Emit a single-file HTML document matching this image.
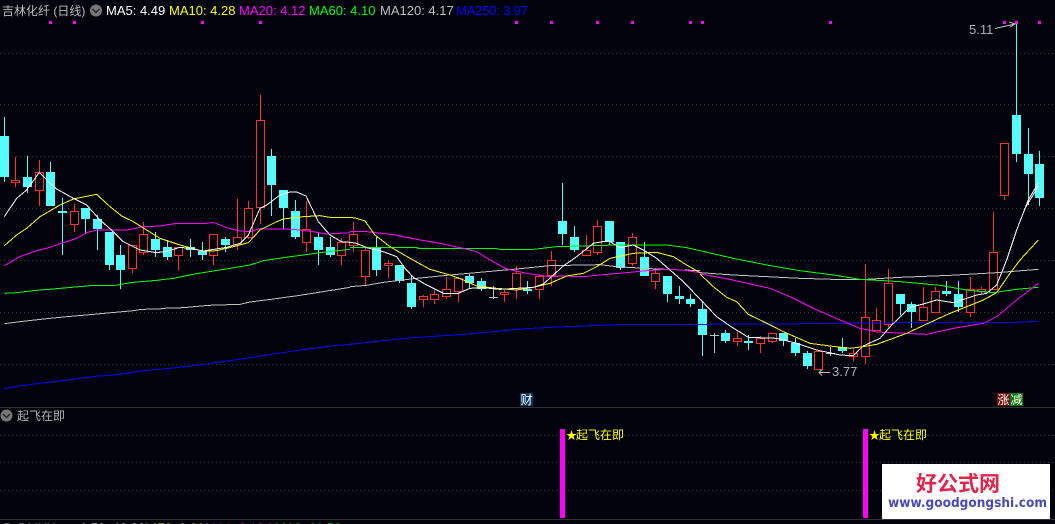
<!DOCTYPE html>
<html lang="zh">
<head>
<meta charset="utf-8">
<title>吉林化纤 (日线)</title>
<style>
html,body{margin:0;padding:0;width:1055px;height:524px;overflow:hidden;background:#02020c}
svg{display:block;position:absolute;left:0;top:0}
text{font-family:"Liberation Sans","Noto Sans CJK SC",sans-serif;font-size:13px}
.l polyline{fill:none;stroke-width:1;vector-effect:non-scaling-stroke}
.cn{font-size:12px}
</style>
</head>
<body>
<svg width="1055" height="524" viewBox="0 0 1055 524" xmlns="http://www.w3.org/2000/svg">
<rect width="1055" height="524" fill="#02020c"/>
<!-- grid -->
<path shape-rendering="crispEdges" d="M0 53.5H1055M0 104.5H1055M0 156.5H1055M0 208.5H1055M0 260.5H1055M0 312.5H1055M0 364.5H1055M0 435.5H1055M0 462.5H1055M0 490.5H1055" stroke="#3c3c3c" stroke-dasharray="1 3" fill="none"/>
<!-- separators -->
<path shape-rendering="crispEdges" d="M0 407.5H1055M0 519.5H1055" stroke="#333" fill="none"/>

<g shape-rendering="crispEdges">
<!-- red wicks -->
<path fill="none" stroke="#ff3232" d="M15.5 157V187M39.5 160V206M74.5 204V232M132.5 245V273M143.5 222V255M178.5 247V270M213.5 234V265M237.5 199V250M248.5 201V239M260.5 95V224M306.5 201V252M341.5 238V265M353.5 222V252M365.5 247V285M388.5 261V278M423.5 295V307M434.5 290V304M446.5 277V299M458.5 277V302M504.5 290V302M516.5 266V299M539.5 274V299M551.5 251V286M586.5 235V256M597.5 220V255M632.5 233V266M655.5 268V289M737.5 332V346M760.5 336V353M772.5 333V343M818.5 351V370M853.5 349V361M865.5 264V364M876.5 308V331M888.5 269V327M923.5 287V321M935.5 287V313M970.5 277V317M981.5 287V294M993.5 212V290M1004.5 143V200"/>
<!-- red bodies -->
<path fill="#02020c" stroke="#ff3232" d="M11.5 180.5h8V182.500h-8zM35.5 172.500h8V190.500h-8zM70.500 211.500h8V224.500h-8zM128.500 245.500h8V268.500h-8zM139.500 234.500h8V252.500h-8zM174.500 247.500h8V255.500h-8zM209.500 234.500h8V255.500h-8zM233.500 237.500h8V244.500h-8zM244.500 208.500h8V237.500h-8zM256.500 120.500h8V207.500h-8zM302.500 229.500h8V242.500h-8zM337.500 242.500h8V255.500h-8zM349.500 234.500h8V245.500h-8zM361.500 250.500h8V276.500h-8zM384.500 263.500h8V265.500h-8zM419.500 296.500h8V299.500h-8zM430.500 294.500h8V299.500h-8zM442.500 289.500h8V296.500h-8zM454.500 278.500h8V291.500h-8zM500.500 292.500h8V294.500h-8zM512.500 273.500h8V288.500h-8zM535.500 276.500h8V289.500h-8zM547.500 260.500h8V275.500h-8zM582.500 250.500h8V255.500h-8zM593.500 226.500h8V252.500h-8zM628.500 237.500h8V263.500h-8zM651.500 273.500h8V281.500h-8zM733.500 338.500h8V341.500h-8zM756.500 338.500h8V343.500h-8zM768.500 333.500h8V341.500h-8zM814.500 351.500h8V369.500h-8zM849.500 353.500h8V356.500h-8zM861.500 317.500h8V356.500h-8zM872.500 320.500h8V330.500h-8zM884.500 283.500h8V324.500h-8zM919.500 307.500h8V320.500h-8zM931.500 291.500h8V312.500h-8zM966.500 289.500h8V312.500h-8zM977.500 289.500h8V291.500h-8zM989.500 252.500h8V289.500h-8zM1000.500 143.500h8V195.500h-8z"/>
<!-- cyan wicks -->
<path fill="none" stroke="#54fcfc" d="M4.500 117V182M27.500 156V193M50.500 162V206M62.500 198V255M85.500 208V233M97.500 215V250M109.500 232V270M120.500 245V289M155.500 232V257M167.500 240V260M190.500 239V257M202.500 242V260M225.500 237V252M271.500 149V216M283.500 190V229M295.500 200V239M318.500 232V265M330.500 237V257M376.500 237V276M399.500 265V283M411.500 276V309M469.500 274V288M481.500 278V291M527.500 281V294M562.500 183V245M574.500 226V252M609.500 221V245M620.500 242V270M644.500 242V276M667.500 276V302M679.500 286V304M690.500 294V307M702.500 301V356M725.500 330V343M748.500 335V350M783.500 333V346M795.500 338V356M807.500 351V369M842.500 338V353M900.500 294V315M911.500 302V328M946.500 281V296M958.500 281V312M1016.500 23V162M1028.500 128V205M1039.500 151V206"/>
<!-- cyan bodies -->
<path fill="#54fcfc" d="M0 136h9V177H0zM23 177h9V187h-9zM46 172h9V206h-9zM58 211h9V213h-9zM81 208h9V219h-9zM93 219h9V229h-9zM105 232h9V265h-9zM116 255h9V270h-9zM151 239h9V250h-9zM163 247h9V257h-9zM186 247h9V250h-9zM198 251h9V255h-9zM221 239h9V245h-9zM267 156h9V185h-9zM279 190h9V208h-9zM291 211h9V237h-9zM314 237h9V250h-9zM326 247h9V255h-9zM372 248h9V270h-9zM395 265h9V281h-9zM407 283h9V307h-9zM465 276h9V283h-9zM477 281h9V289h-9zM523 289h9V291h-9zM558 221h9V234h-9zM570 237h9V250h-9zM605 221h9V242h-9zM616 242h9V268h-9zM640 257h9V276h-9zM663 276h9V294h-9zM675 296h9V299h-9zM686 299h9V304h-9zM698 309h9V335h-9zM721 333h9V341h-9zM744 341h9V343h-9zM779 333h9V341h-9zM791 343h9V353h-9zM803 353h9V366h-9zM838 347h9V351h-9zM896 294h9V304h-9zM907 304h9V312h-9zM942 291h9V294h-9zM954 294h9V307h-9zM1012 115h9V154h-9zM1024 154h9V174h-9zM1035 164h9V198h-9z"/>
<!-- gray doji -->
<path fill="none" stroke="#c0c0c0" d="M493.500 286V299M489 297.500h9M714.500 333V353M710 335.500h9M830.500 347V356M826 353.500h9"/>
<!-- top markers -->
<path fill="#ff00ff" d="M49 21h3v3h-3zM73 21h3v3h-3zM201 21h3v3h-3zM259 21h3v3h-3zM515 21h3v3h-3zM550 21h3v3h-3zM596 21h3v3h-3zM631 21h3v3h-3zM689 21h3v3h-3zM701 21h3v3h-3zM829 21h3v3h-3zM1003 21h3v3h-3zM1015 21h3v3h-3zM1038 21h3v3h-3z"/>
<!-- lower bars -->
<rect x="560" y="429" width="5" height="89" fill="#ff00ff"/>
<rect x="863" y="429" width="5" height="89" fill="#ff00ff"/>
</g>

<!-- moving averages -->
<g class="l" shape-rendering="crispEdges">
<g stroke="#c0c0c0">
<g transform="translate(0,290) scale(.33333)"><polyline points="13,101 60,95 140,86 200,80 270,74 345,67 400,62 425,58 480,57 490,55 550,53 625,46 720,43 750,36 820,27 900,16 1000,0 1050,-8"/></g>
<g transform="translate(350,200) scale(.33333)"><polyline points="0,260 50,256 100,247 200,235 300,225 400,216 500,207 600,197 750,194 800,200 900,206 1050,212"/></g>
<g transform="translate(700,200) scale(.33333)"><polyline points="0,218 100,225 200,230 300,235 400,238 500,238 600,232 750,226 890,218 1015,208"/></g>
</g>
<g stroke="#0000ff">
<g transform="translate(0,290) scale(.33333)"><polyline points="13,296 60,287 135,278 195,271 285,259 345,255 415,244 475,238 550,231 625,221 695,211 770,200 860,186 940,175 1010,166 1050,163"/></g>
<g transform="translate(350,200) scale(.33333)"><polyline points="0,433 100,422 200,412 300,406 400,398 500,388 600,382 725,377 830,373 1050,373"/></g>
<g transform="translate(700,200) scale(.33333)"><polyline points="0,373 340,371 600,368 930,368 1015,364"/></g>
</g>
<g stroke="#00ff00">
<g transform="translate(0,90) scale(.33333)"><polyline points="13,610 50,608 100,602 170,596 270,587 345,586 400,577 470,571 520,565 590,551 690,535 750,525 790,512 850,503 910,495 960,488 1050,478"/></g>
<g transform="translate(350,200) scale(.33333)"><polyline points="0,142 200,142 205,145 440,146 450,148 550,148 620,140 800,135 950,135 1010,143 1050,152"/></g>
<g transform="translate(700,200) scale(.33333)"><polyline points="0,152 100,175 200,195 300,212 400,225 480,238 600,245 720,256 800,270 880,278 950,268 1015,262"/></g>
</g>
<g stroke="#ff00ff">
<g transform="translate(0,90) scale(.33333)"><polyline points="13,527 60,500 110,482 150,472 190,458 230,445 260,428 290,420 380,420 430,410 480,408 530,400 620,400 640,397 680,413 720,423 750,425 780,416 880,418 940,425 980,432 1050,428"/></g>
<g transform="translate(350,200) scale(.33333)"><polyline points="0,94 50,95 130,104 200,118 270,130 330,143 380,155 420,180 470,207 540,222 600,230 640,228 700,230 760,224 830,218 890,212 950,208 1000,210 1050,218"/></g>
<g transform="translate(700,200) scale(.33333)"><polyline points="0,222 80,236 210,265 270,290 340,325 420,360 480,385 530,396 620,400 680,403 760,385 850,370 890,350 950,300 1015,250"/></g>
</g>
<g stroke="#ffff00">
<g transform="translate(0,90) scale(.33333)"><polyline points="13,467 50,435 80,415 120,380 180,345 220,327 290,313 330,350 365,378 400,395 440,420 480,445 540,465 610,484 650,482 700,470 745,458 780,420 830,395 850,387 910,380 960,377 990,382 1050,382"/></g>
<g transform="translate(350,200) scale(.33333)"><polyline points="0,52 20,55 45,63 75,105 120,140 180,175 240,208 300,225 340,240 380,258 440,265 500,270 550,262 600,250 650,228 700,220 740,200 780,175 850,160 920,157 970,170 1010,195 1050,218"/></g>
<g transform="translate(700,200) scale(.33333)"><polyline points="0,222 40,260 80,292 110,305 145,343 205,372 250,395 330,430 390,438 450,445 490,440 530,433 620,400 680,372 750,340 800,320 850,300 890,278 930,220 960,180 1015,120"/></g>
</g>
<g stroke="#ffffff">
<g transform="translate(0,90) scale(.33333)"><polyline points="13,380 50,325 80,300 118,247 150,280 170,297 220,325 260,345 300,390 340,425 370,455 420,480 470,488 500,484 540,472 570,475 610,483 680,472 720,460 745,435 780,355 800,345 840,315 870,306 890,306 918,318 955,395 990,435 1024,455 1050,457"/></g>
<g transform="translate(350,200) scale(.33333)"><polyline points="0,127 20,130 50,143 100,155 140,170 165,205 190,232 230,255 280,280 325,280 360,265 400,263 450,268 500,265 550,262 580,252 640,198 680,170 730,130 775,122 810,143 850,135 880,150 920,175 960,210 1000,245 1050,297"/></g>
<g transform="translate(700,200) scale(.33333)"><polyline points="0,297 50,350 90,378 145,412 230,415 290,430 350,450 420,465 460,467 490,438 540,415 575,375 630,322 670,312 710,300 760,308 800,295 830,285 860,280 890,255 920,180 950,90 985,0 1014,-50 1015,-50"/></g>
<g transform="translate(950,10) scale(.33333)"><polyline points="222,600 266,527"/></g>
</g>
</g>

<!-- header -->
<text x="2" y="15" class="cn" fill="#bdbdbd">吉林化纤 (日线)</text>
<circle cx="96" cy="10.500" r="6" fill="#777"/>
<path d="M92.500 9l3.500 3.500L99.500 9" fill="none" stroke="#222" stroke-width="1.300"/>
<text x="106" y="15" fill="#ffffff">MA5: 4.49</text>
<text x="169" y="15" fill="#ffff00">MA10: 4.28</text>
<text x="239" y="15" fill="#ff00ff">MA20: 4.12</text>
<text x="309" y="15" fill="#00ff00">MA60: 4.10</text>
<text x="380" y="15" fill="#c0c0c0">MA120: 4.17</text>
<text x="456" y="15" fill="#0000ff" textLength="72">MA250: 3.97</text>

<!-- price annotations -->
<text x="969" y="34" fill="#a8b0b8">5.11</text>
<path d="M995 28.500L1015 24M1009 22l6 2-5 3" fill="none" stroke="#c0c0c0"/>
<text x="832" y="376" fill="#a8b0b8">3.77</text>
<path d="M830 372.500H819M822 369.500l-3 3 3 3" fill="none" stroke="#c0c0c0"/>

<!-- date tags -->
<rect x="520" y="393" width="13" height="13" fill="#0a3a6a"/>
<text x="520.500" y="404" class="cn" fill="#fff">财</text>
<rect x="997" y="393" width="13" height="13" fill="#7a0a0a"/>
<text x="997.500" y="404" class="cn" fill="#fff">涨</text>
<rect x="1010" y="393" width="13" height="13" fill="#0a7a0a"/>
<text x="1010.500" y="404" class="cn" fill="#fff">减</text>

<!-- lower pane -->
<circle cx="6.500" cy="415.500" r="6" fill="#777"/>
<path d="M3 414l3.500 3.500L10 414" fill="none" stroke="#222" stroke-width="1.300"/>
<text x="17" y="420" class="cn" fill="#b4b4b4">起飞在即</text>
<text x="566" y="439" fill="#ffff00" style="font-size:11px">★</text>
<text x="576" y="439" class="cn" fill="#ffff00">起飞在即</text>
<text x="869" y="439" fill="#ffff00" style="font-size:11px">★</text>
<text x="879" y="439" class="cn" fill="#ffff00">起飞在即</text>

<!-- watermark -->
<rect x="882" y="464" width="168" height="55" fill="#ffffff"/>
<text x="916" y="491" fill="#e0244a" style="font-size:21px;font-weight:bold">好公式网</text>
<text x="888" y="507" fill="#4a4ab8" textLength="159" lengthAdjust="spacingAndGlyphs" style="font-family:'DejaVu Sans',sans-serif;font-size:13.500px;font-weight:bold">www.goodgongshi.com</text>

<!-- clipped bottom row -->
<circle cx="7" cy="529" r="6" fill="#777"/>
<text x="18" y="532.500" fill="#c0c0c0">DMXX</text>
<text x="80" y="532.500" fill="#ffffff">1.52: 40.39</text>
<text x="143" y="532.500" fill="#ffff00">1470: 0.00</text>
<text x="205" y="532.500" fill="#ff00ff">MA1: 0.13 M</text>
<text x="275" y="532.500" fill="#00ff00">MA2: 61.53</text>
</svg>
</body>
</html>
